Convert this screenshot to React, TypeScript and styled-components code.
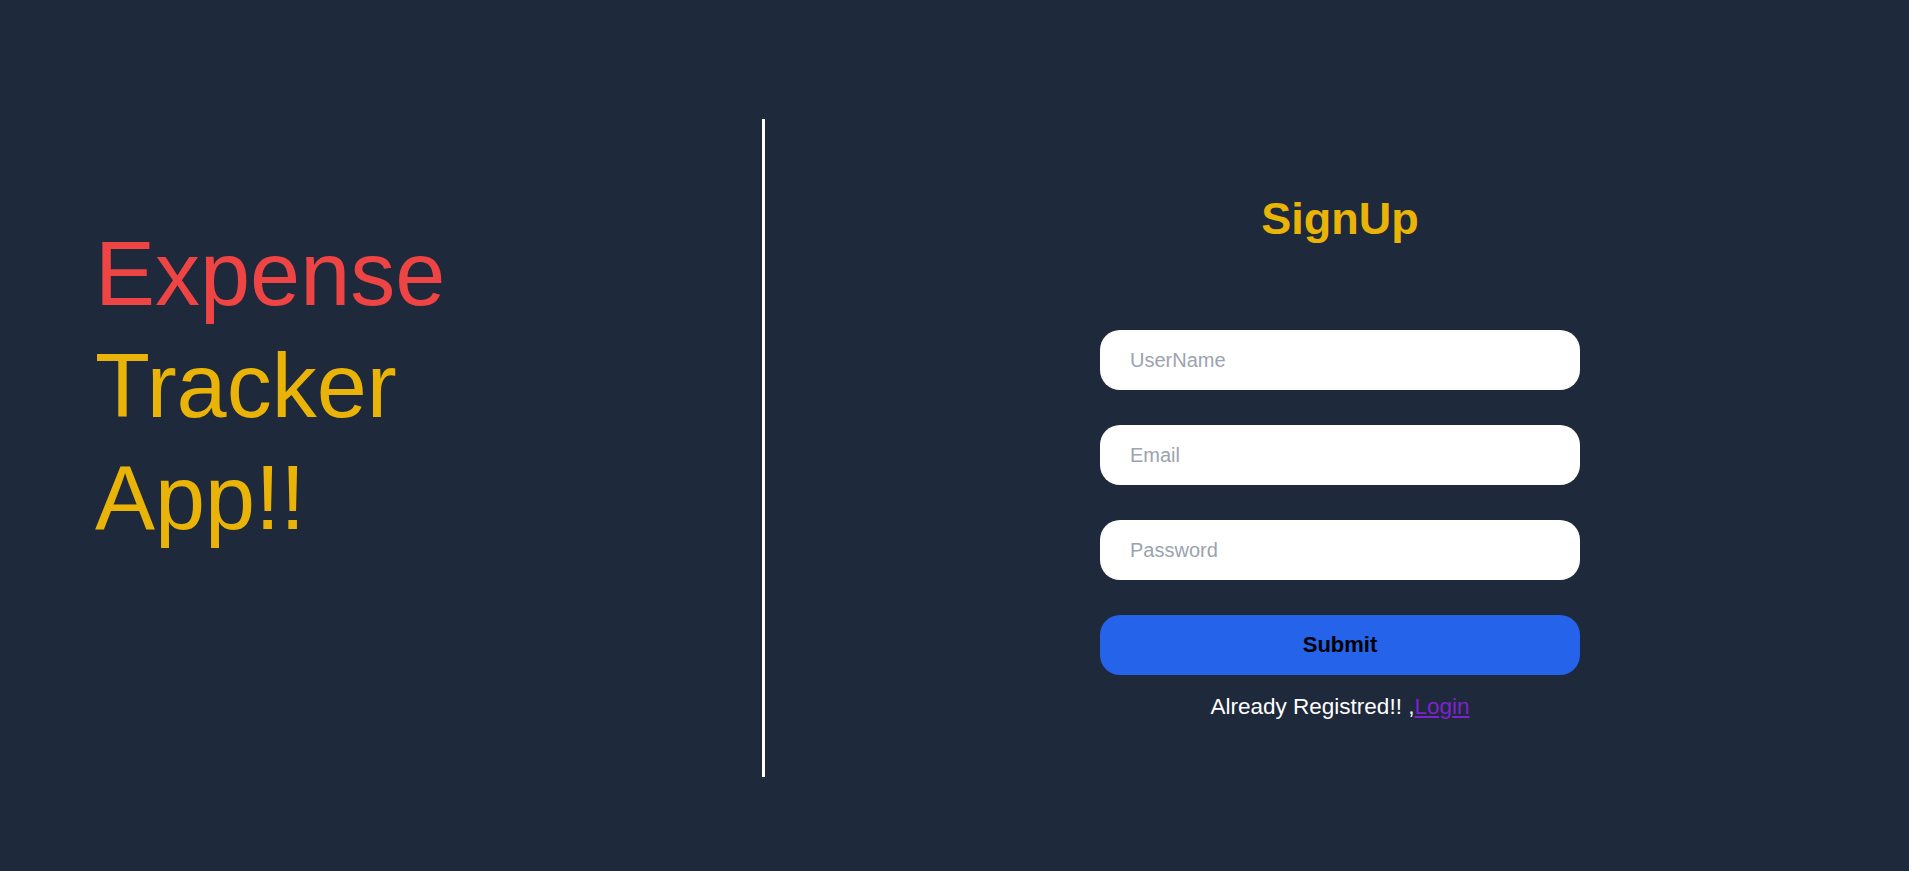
import React from "react";
import styled, { createGlobalStyle } from "styled-components";

const GlobalStyle = createGlobalStyle`
  html, body {
    margin: 0;
    padding: 0;
    background: #1e293b;
    font-family: "Liberation Sans", Arial, sans-serif;
  }
  * { box-sizing: border-box; }
`;

const Page = styled.div`
  width: 100%;
  height: 871px;
  background: #1e293b;
  padding-top: 119px;
  overflow: hidden;
`;

const Split = styled.div`
  display: grid;
  grid-template-columns: 762px 3px 1fr;
  height: 658px;
`;

const LeftPanel = styled.section`
  padding-top: 99px;
  padding-left: 95px;
`;

const Title = styled.h1`
  margin: 0;
  font-weight: 400;
  font-size: 90px;
  line-height: 112px;
`;

const Word = styled.span<{ $color: string }>`
  display: block;
  color: ${(p) => p.$color};
`;

const Divider = styled.div`
  background: #ffffff;
  width: 3px;
  height: 100%;
`;

const RightPanel = styled.section`
  display: flex;
  flex-direction: column;
  align-items: center;
  padding-top: 74px;
  padding-left: 6px;
`;

const Heading = styled.h2`
  margin: 0;
  color: #eab308;
  font-weight: 700;
  font-size: 45px;
  line-height: 52px;
`;

const Form = styled.form`
  display: flex;
  flex-direction: column;
  gap: 35px;
  width: 480px;
  margin-top: 85px;
`;

const Input = styled.input`
  width: 100%;
  height: 60px;
  border: none;
  outline: none;
  border-radius: 20px;
  background: #ffffff;
  padding: 0 30px;
  font-family: "Liberation Sans", Arial, sans-serif;
  font-size: 20px;
  color: #111827;
  &::placeholder {
    color: #9ca3af;
  }
`;

const SubmitButton = styled.button`
  width: 100%;
  height: 60px;
  border: none;
  border-radius: 20px;
  background: #2563eb;
  color: #000000;
  font-family: "Liberation Sans", Arial, sans-serif;
  font-weight: 700;
  font-size: 22px;
  cursor: pointer;
`;

const Footer = styled.p`
  margin: 19px 0 0;
  color: #ffffff;
  font-size: 22.5px;
  line-height: 26px;
  text-align: center;
`;

const LoginLink = styled.a`
  color: #7e22ce;
  text-decoration: underline;
`;

export default function App() {
  return (
    <>
      <GlobalStyle />
      <Page>
        <Split>
          <LeftPanel>
            <Title>
              <Word $color="#ef4444">Expense</Word>
              <Word $color="#eab308">Tracker</Word>
              <Word $color="#eab308">App!!</Word>
            </Title>
          </LeftPanel>
          <Divider />
          <RightPanel>
            <Heading>SignUp</Heading>
            <Form onSubmit={(e) => e.preventDefault()}>
              <Input type="text" placeholder="UserName" />
              <Input type="email" placeholder="Email" />
              <Input type="password" placeholder="Password" />
              <SubmitButton type="submit">Submit</SubmitButton>
            </Form>
            <Footer>
              Already Registred!! ,<LoginLink href="#">Login</LoginLink>
            </Footer>
          </RightPanel>
        </Split>
      </Page>
    </>
  );
}
